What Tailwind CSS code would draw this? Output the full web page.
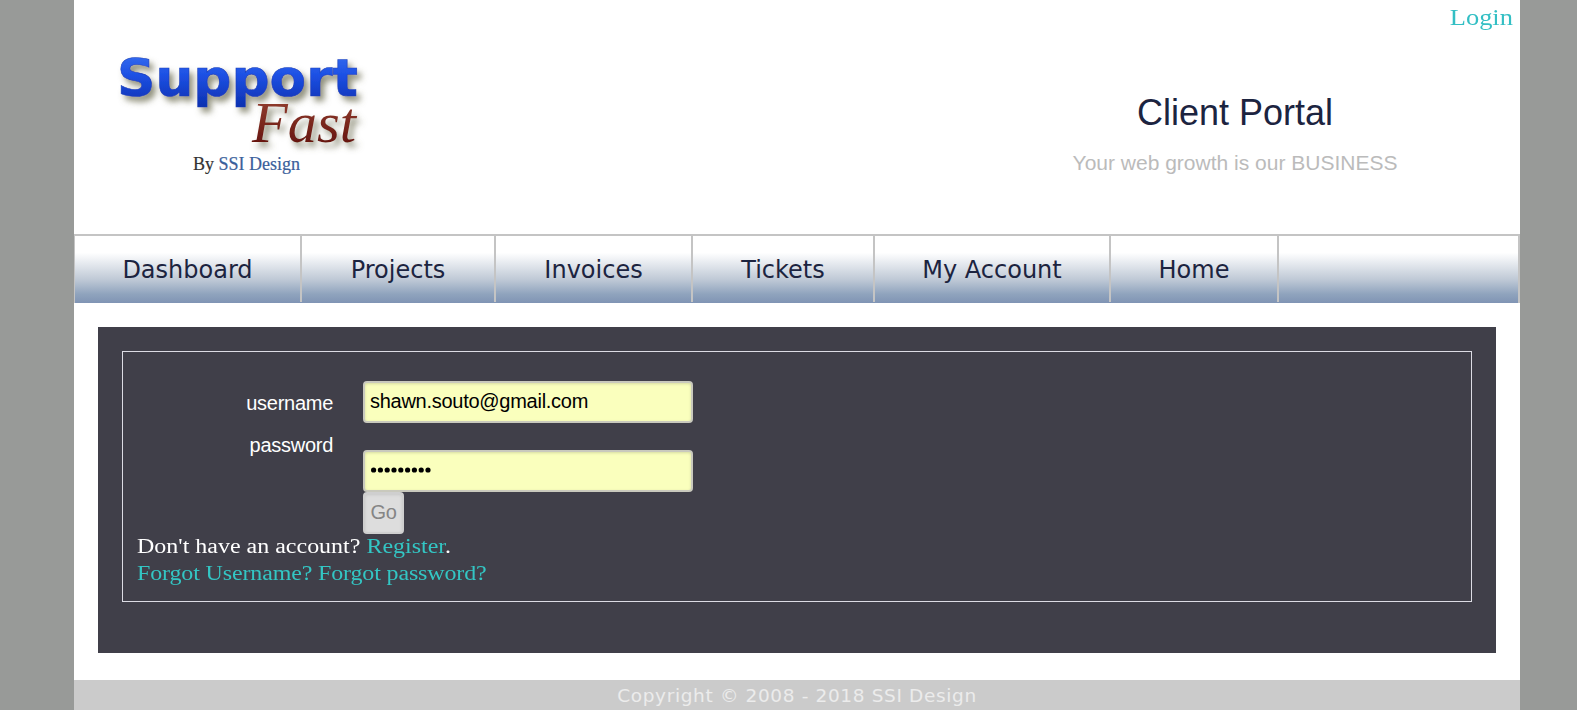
<!DOCTYPE html>
<html lang="en">
<head>
<meta charset="utf-8">
<title>Client Portal</title>
<script src="https://cdn.jsdelivr.net/npm/@tailwindcss/browser@4"></script>
</head>
<body class="bg-[#989a98] h-[710px] overflow-hidden">
<div class="ml-[74px] w-[1446px] h-[710px] bg-white flex flex-col font-['Liberation_Sans',sans-serif]">
  <header class="h-[234px] flex justify-between">
    <svg class="ml-[36px] mt-[40px] w-[260px] h-[150px]" viewBox="0 0 260 150">
      <defs>
        <linearGradient id="blue" x1="0" y1="0" x2="0" y2="1"><stop offset="0" stop-color="#3c74f2"/><stop offset=".45" stop-color="#1d50e4"/><stop offset="1" stop-color="#0b2fae"/></linearGradient>
        <linearGradient id="red" x1="0" y1="0" x2="0" y2="1"><stop offset="0" stop-color="#9a4435"/><stop offset="1" stop-color="#5c0d08"/></linearGradient>
        <filter id="shadow" x="-10%" y="-20%" width="130%" height="160%"><feDropShadow dx="4" dy="5" stdDeviation="3" flood-color="#6b6b50" flood-opacity=".75"/></filter>
      </defs>
      <text x="7" y="56" textLength="241" lengthAdjust="spacingAndGlyphs" font-family="DejaVu Sans" font-weight="700" font-size="52" fill="url(#blue)" stroke="#1a3fb8" stroke-width=".6" filter="url(#shadow)">Support</text>
      <text x="142" y="102" textLength="104" lengthAdjust="spacingAndGlyphs" font-family="Liberation Serif" font-style="italic" font-size="57" fill="url(#red)" filter="url(#shadow)">Fast</text>
      <text x="83" y="130" textLength="107" lengthAdjust="spacingAndGlyphs" font-family="Liberation Serif" font-size="19" fill="#333" stroke="#333" stroke-width=".2">By <tspan fill="#3a609b" stroke="#3a609b">SSI Design</tspan></text>
    </svg>
    <div class="w-[570px] flex flex-col items-center">
      <a class="self-end mr-[7px] h-[35px] leading-[35px] text-[23px] text-[#33bfc4] font-['Liberation_Serif',serif] origin-right scale-x-[1.15]">Login</a>
      <h1 class="mt-[57px] text-[36px] leading-[41px] text-[#1c2440]">Client Portal</h1>
      <p class="mt-[18px] text-[21px] leading-[24px] text-[#bbb] whitespace-nowrap">Your web growth is our BUSINESS</p>
    </div>
  </header>
  <nav class="h-[69px] shrink-0 border-t-2 border-r-2 border-l border-[#c4c4c4] bg-[linear-gradient(to_bottom,#fff_0%,#fff_25%,#bfc9d6_65%,#8fa3bd_87%,#8094b4_100%)] flex text-[24px] leading-[68px] text-[#1c2440] font-['DejaVu_Sans',sans-serif]">
    <a class="w-[227px] h-[66px] border-r-2 border-[#c4c4c4] text-center">Dashboard</a>
    <a class="w-[194px] h-[66px] border-r-2 border-[#c4c4c4] text-center">Projects</a>
    <a class="w-[197px] h-[66px] border-r-2 border-[#c4c4c4] text-center">Invoices</a>
    <a class="w-[182px] h-[66px] border-r-2 border-[#c4c4c4] text-center">Tickets</a>
    <a class="w-[236px] h-[66px] border-r-2 border-[#c4c4c4] text-center">My Account</a>
    <a class="w-[168px] h-[66px] border-r-2 border-[#c4c4c4] text-center">Home</a>
  </nav>
  <main class="mx-[24px] mt-[24px] h-[326px] shrink-0 bg-[#403f49] p-[24px]">
    <form class="h-[251px] border border-[#dcdce4] px-[15px] pt-[29px] text-white">
      <div class="flex h-[152px] text-[20px] tracking-[-0.27px]">
        <div class="w-[195px] text-right leading-[42px] pt-[1px]">
          <label class="block">username</label>
          <label class="block">password</label>
        </div>
        <div class="ml-[30px]">
          <div class="w-[330px] h-[42px] rounded-[4px] border-2 border-[#c9c9bd] bg-[#faffbd] shadow-[inset_0_1px_3px_rgba(0,0,0,0.15)] text-black px-[5px] leading-[37px]">shawn.souto@gmail.com</div>
          <div class="mt-[27px] w-[330px] h-[42px] rounded-[4px] border-2 border-[#c9c9bd] bg-[#faffbd] shadow-[inset_0_1px_3px_rgba(0,0,0,0.15)] px-[6px] pt-[15px]">
            <svg class="block w-[62px] h-[6px]" viewBox="0 0 62 6"><g fill="#000"><circle cx="2.6" cy="3" r="2.6"/><circle cx="9.4" cy="3" r="2.6"/><circle cx="16.2" cy="3" r="2.6"/><circle cx="23" cy="3" r="2.6"/><circle cx="29.8" cy="3" r="2.6"/><circle cx="36.6" cy="3" r="2.6"/><circle cx="43.4" cy="3" r="2.6"/><circle cx="50.2" cy="3" r="2.6"/><circle cx="57" cy="3" r="2.6"/></g></svg>
          </div>
          <button type="button" class="block w-[41px] h-[42px] rounded-[4px] border-2 border-[#cfcfcf] bg-[#ddd] text-[#858585] leading-[36px] pb-[2px] shadow-[inset_0_1px_3px_rgba(0,0,0,0.1)]">Go</button>
        </div>
      </div>
      <div class="-ml-px w-max text-[20.5px] leading-[27px] font-['Liberation_Serif',serif] origin-left scale-x-[1.17]">
        <p>Don't have an account? <a class="text-[#33c6c4]">Register</a>.</p>
        <p class="text-[#33c6c4] tracking-[-0.12px]">Forgot Username? Forgot password?</p>
      </div>
    </form>
  </main>
  <footer class="mt-[27px] h-[30px] bg-[#cbcbcb] text-center text-[18.5px] tracking-[0.64px] leading-[31px] text-[#ececec] font-['DejaVu_Sans',sans-serif]">Copyright © 2008 - 2018 SSI Design</footer>
</div>
</body>
</html>
